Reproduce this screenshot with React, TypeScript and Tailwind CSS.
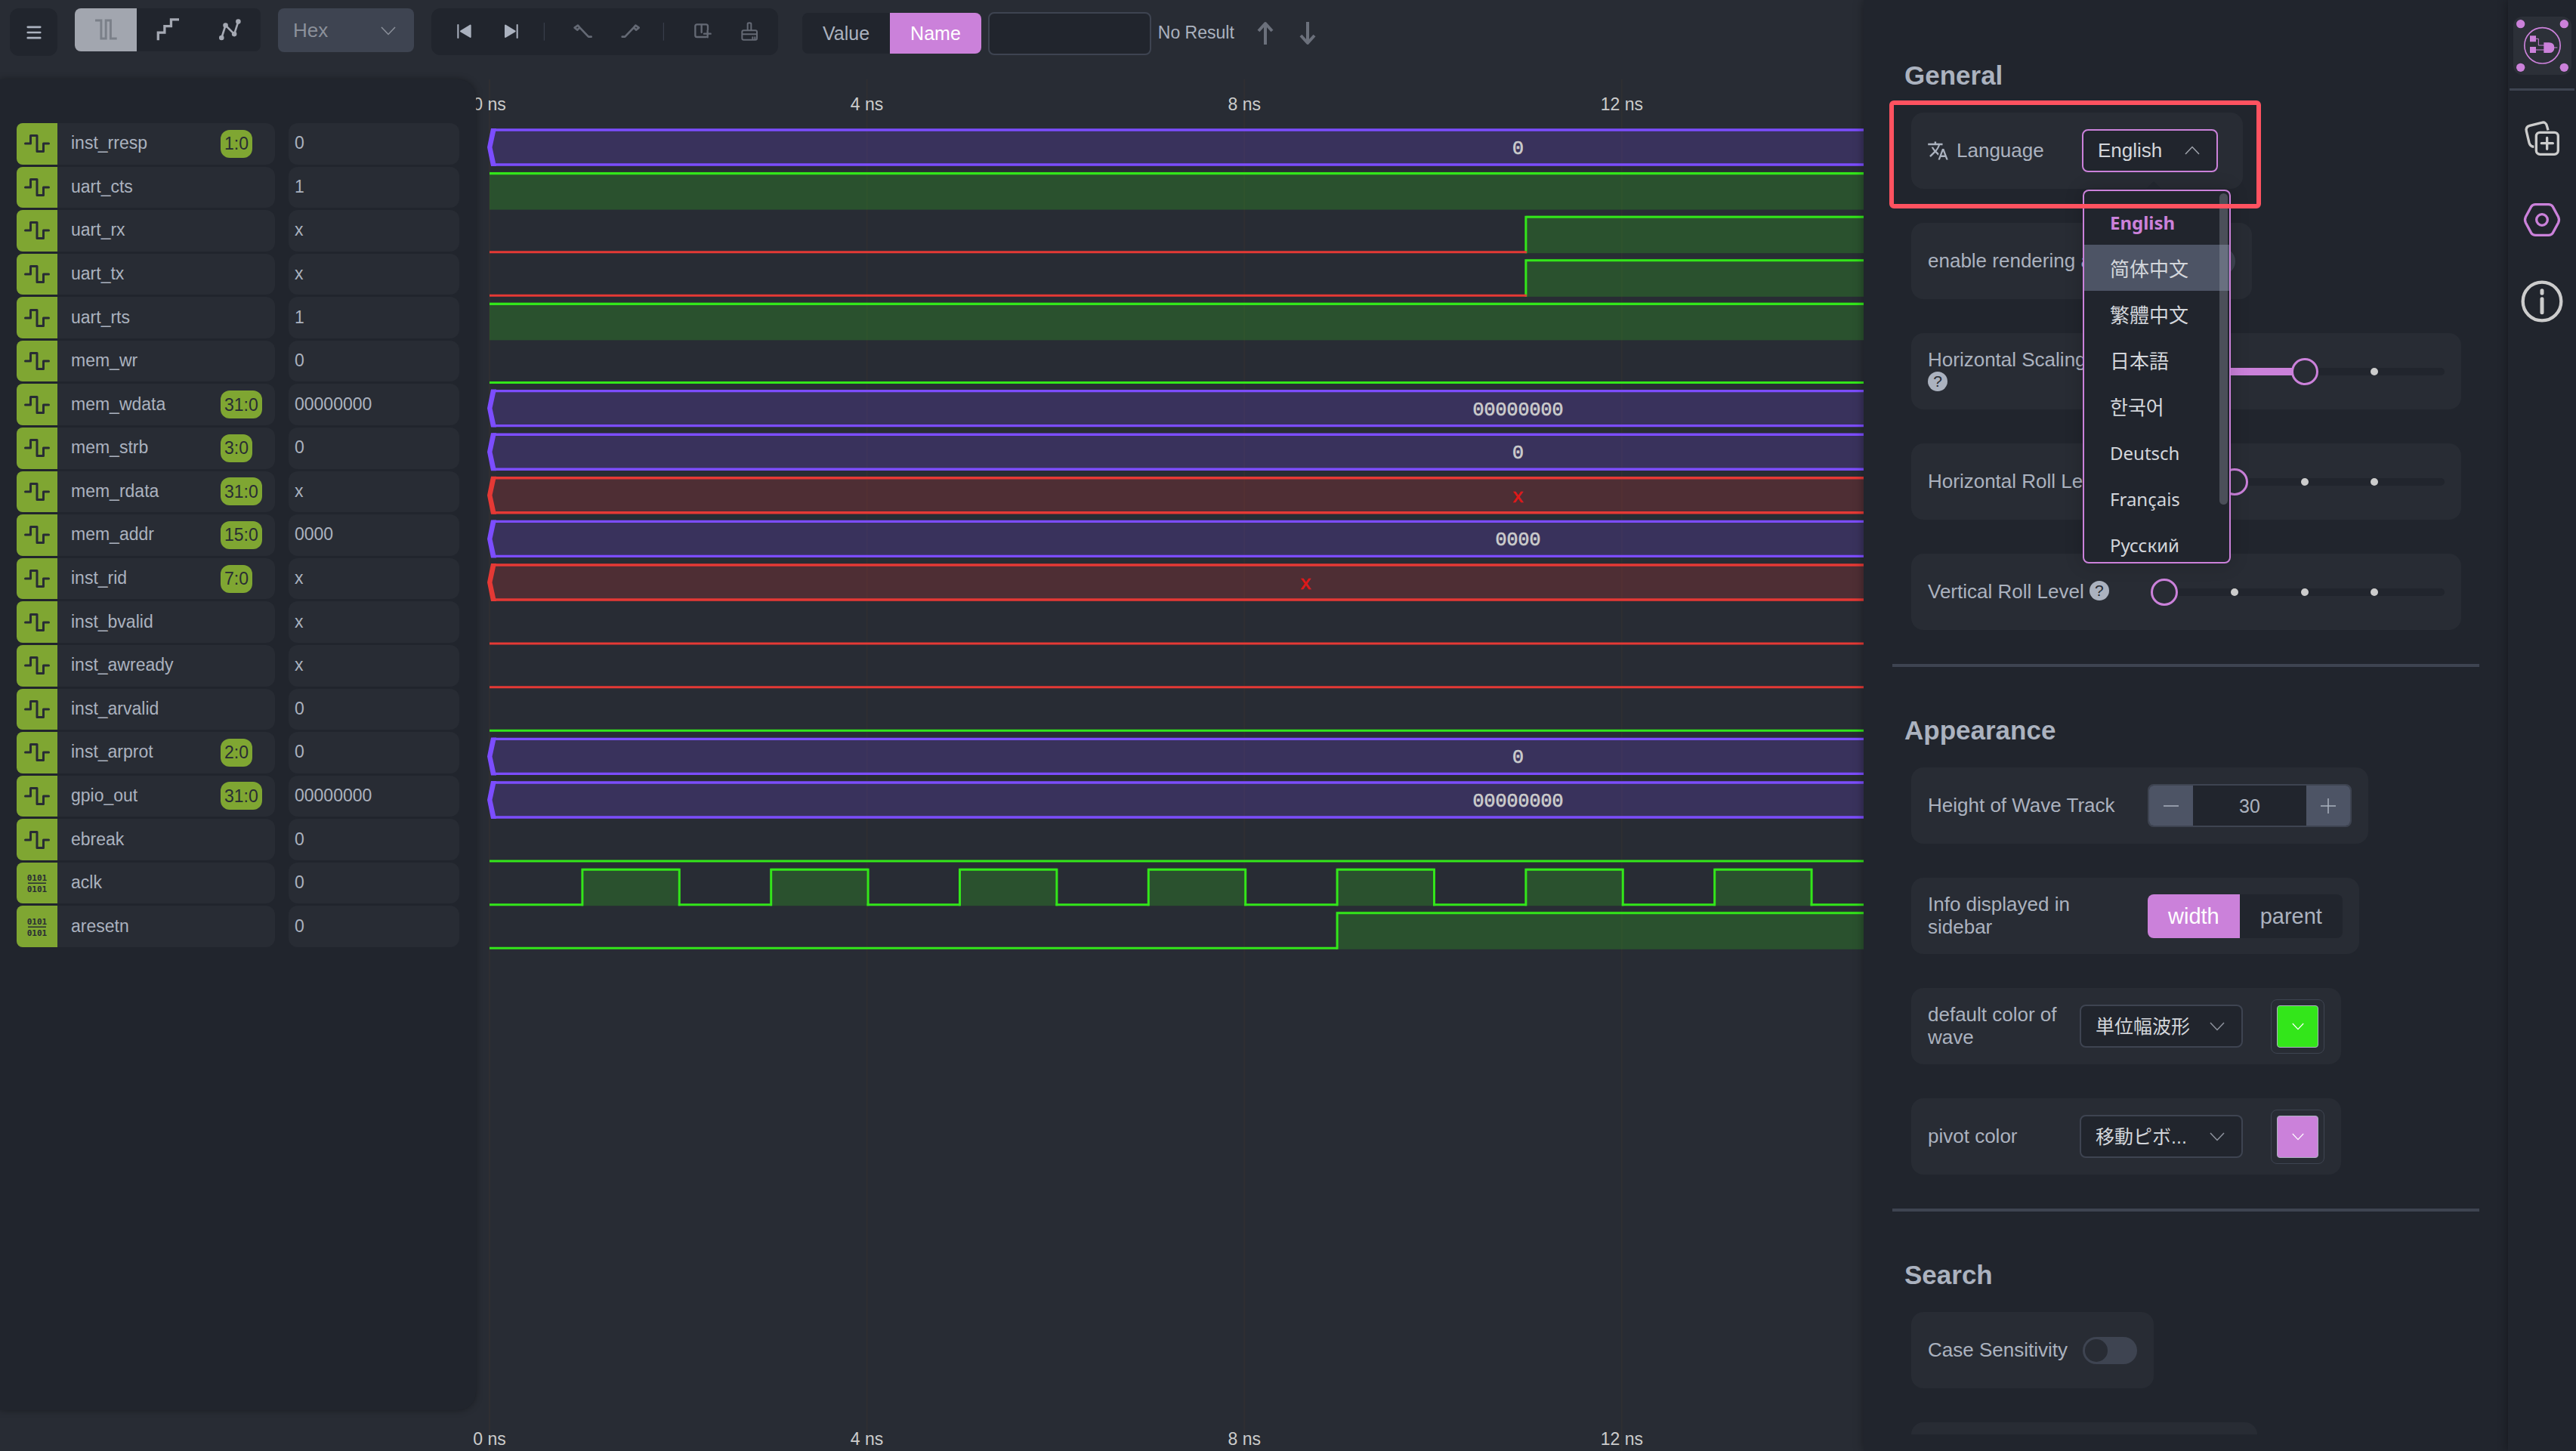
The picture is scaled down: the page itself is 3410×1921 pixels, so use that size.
import { useState, type ReactNode } from 'react';
import { MdTranslate } from 'react-icons/md';

type Wave = 'bus' | 'busX' | 'high' | 'low' | 'x' | 'lateHigh' | 'clock' | 'reset';

type Signal = {
  name: string;
  range?: string;
  value: string;
  wave: Wave;
  label?: string;
  labelNs?: number;
  param?: boolean;
};

const SIGNALS: Signal[] = [
  { name: 'inst_rresp', range: '1:0', value: '0', wave: 'bus', label: '0' },
  { name: 'uart_cts', value: '1', wave: 'high' },
  { name: 'uart_rx', value: 'x', wave: 'lateHigh' },
  { name: 'uart_tx', value: 'x', wave: 'lateHigh' },
  { name: 'uart_rts', value: '1', wave: 'high' },
  { name: 'mem_wr', value: '0', wave: 'low' },
  { name: 'mem_wdata', range: '31:0', value: '00000000', wave: 'bus', label: '00000000' },
  { name: 'mem_strb', range: '3:0', value: '0', wave: 'bus', label: '0' },
  { name: 'mem_rdata', range: '31:0', value: 'x', wave: 'busX', label: 'x' },
  { name: 'mem_addr', range: '15:0', value: '0000', wave: 'bus', label: '0000' },
  { name: 'inst_rid', range: '7:0', value: 'x', wave: 'busX', label: 'x', labelNs: 8.65 },
  { name: 'inst_bvalid', value: 'x', wave: 'x' },
  { name: 'inst_awready', value: 'x', wave: 'x' },
  { name: 'inst_arvalid', value: '0', wave: 'low' },
  { name: 'inst_arprot', range: '2:0', value: '0', wave: 'bus', label: '0' },
  { name: 'gpio_out', range: '31:0', value: '00000000', wave: 'bus', label: '00000000' },
  { name: 'ebreak', value: '0', wave: 'low' },
  { name: 'aclk', value: '0', wave: 'clock', param: true },
  { name: 'aresetn', value: '0', wave: 'reset', param: true },
];

const NS = 124.9;
const X0 = 18;
const END = 3200;
const PITCH = 57.6;
const TOP = 65;
const GREEN = '#33e61a';
const RED = '#e53935';
const PURPLE = '#7c4dff';

const at = (ns: number) => X0 + ns * NS;

function Pulse({ from, to, y }: { from: number; to: number; y: number }) {
  return (
    <>
      <rect x={from} y={y} width={to - from} height={50} fill={GREEN} fillOpacity={0.2} />
      <path d={`M${from} ${y + 50}V${y + 2}H${to}V${y + 50}`} fill="none" stroke={GREEN} strokeWidth={3} />
    </>
  );
}

function Low({ from, to, y, color }: { from: number; to: number; y: number; color: string }) {
  return <path d={`M${from} ${y + 48.5}H${to}`} stroke={color} strokeWidth={3} />;
}

function Bus({ y, color }: { y: number; color: string }) {
  return (
    <>
      <path d={`M${END} ${y + 1}H24L18 ${y + 25}L24 ${y + 49}H${END}z`} fill={color} fillOpacity={0.2} />
      <path d={`M22 ${y + 2}H${END}M22 ${y + 48}H${END}`} stroke={color} strokeWidth={3.4} />
      <path
        d={`M20 ${y}L15 ${y + 25}L20 ${y + 50}H27L21.5 ${y + 25}L27 ${y}z`}
        fill={color}
      />
    </>
  );
}

function WaveRow({ signal, y }: { signal: Signal; y: number }) {
  switch (signal.wave) {
    case 'bus':
      return <Bus y={y} color={PURPLE} />;
    case 'busX':
      return <Bus y={y} color={RED} />;
    case 'high':
      return (
        <>
          <rect x={X0} y={y} width={END} height={50} fill={GREEN} fillOpacity={0.2} />
          <path d={`M${X0} ${y + 2}H${END}`} stroke={GREEN} strokeWidth={3.4} />
        </>
      );
    case 'low':
      return <Low from={X0} to={END} y={y} color={GREEN} />;
    case 'x':
      return <Low from={X0} to={END} y={y} color={RED} />;
    case 'lateHigh':
      return (
        <>
          <Pulse from={at(11) - 2} to={END} y={y} />
          <Low from={X0} to={at(11) - 1} y={y} color={RED} />
        </>
      );
    case 'reset':
      return (
        <>
          <Low from={X0} to={at(9) - 2} y={y} color={GREEN} />
          <Pulse from={at(9) - 2} to={END} y={y} />
        </>
      );
    case 'clock':
      return (
        <>
          {[1, 3, 5, 7, 9, 11, 13, 15, 17, 19].map((t) => (
            <g key={t}>
              <Low from={t === 1 ? X0 : at(t - 1)} to={at(t) - 1} y={y} color={GREEN} />
              <Pulse from={at(t) - 2} to={at(t + 1) + 1.5} y={y} />
            </g>
          ))}
        </>
      );
  }
}

function WaveCanvas() {
  const ticks = [0, 4, 8, 12, 16, 20];
  return (
    <svg className="block h-full w-full overflow-visible" role="img" aria-label="Waveforms">
      {ticks.map((t) => (
        <line key={t} x1={at(t)} x2={at(t)} y1="0" y2="100%" stroke="#2f2f32" strokeWidth={2} />
      ))}
      {SIGNALS.map((s, i) => (
        <g key={s.name}>
          <WaveRow signal={s} y={TOP + i * PITCH} />
          {s.label && (
            <text
              x={at(s.labelNs ?? 10.9)}
              y={TOP + i * PITCH + 34}
              textAnchor="middle"
              fill={s.wave === 'busX' ? '#e01818' : '#cccccc'}
              stroke={s.wave === 'busX' ? '#e01818' : '#cccccc'}
              strokeWidth={0.7}
              className="font-['Liberation_Mono',monospace] text-[25px]"
            >
              {s.label}
            </text>
          )}
        </g>
      ))}
      {ticks.map((t) => (
        <g key={t} fill="#cccccc" textAnchor="middle" className="text-[23px]">
          <text x={at(t)} y={41}>{`${t} ns`}</text>
          <text x={at(t)} y="100%" dy={-8}>{`${t} ns`}</text>
        </g>
      ))}
    </svg>
  );
}

function PulseGlyph() {
  return (
    <svg viewBox="0 0 54 54" className="h-[54px] w-[54px]" fill="none" stroke="#282c34" strokeWidth={3} strokeLinecap="round" strokeLinejoin="round">
      <path d="M11.5 27H18.500V16.500H27V37.500H35.500V27H42.500" />
    </svg>
  );
}

function BitsGlyph() {
  return (
    <svg viewBox="0 0 54 54" className="h-[54px] w-[54px]" fill="#282c34">
      <g textAnchor="middle" className="font-['DejaVu_Sans_Mono',monospace] text-[11px] font-bold">
        <text x="27" y="24">0101</text>
        <text x="27" y="39">0101</text>
      </g>
      <rect x="15" y="26.500" width="24" height="1.500" />
    </svg>
  );
}

function SignalPanel() {
  return (
    <aside className="relative z-10 mb-[54px] w-[630px] shrink-0 rounded-r-3xl bg-[#21252d] pt-[58px] pl-[22px] shadow-[0_0_10px_rgba(0,0,0,0.35)]">
      <ul className="grid h-[1094px] grid-rows-[repeat(19,1fr)]">
        {SIGNALS.map((s) => (
          <li key={s.name} className="flex gap-[18px] pb-[3px]">
            <div className="flex w-[342px] overflow-hidden rounded-l-lg rounded-r-xl bg-[#282c34]">
              <span className="flex w-[54px] items-center bg-[#7fa632]">{s.param ? <BitsGlyph /> : <PulseGlyph />}</span>
              <span className="flex flex-1 items-center pl-[18px]">
                <span className="w-[198px] shrink-0 pb-0.5">{s.name}</span>
                {s.range && (
                  <span className="flex h-[37px] items-center rounded-xl bg-[#7fa632] px-[5px] text-[#282c34]">{s.range}</span>
                )}
              </span>
            </div>
            <div className="flex w-[226px] items-center rounded-xl bg-[#282c34] pb-0.5 pl-2">{s.value}</div>
          </li>
        ))}
      </ul>
    </aside>
  );
}

function Chevron({ className, up = false }: { className: string; up?: boolean }) {
  return (
    <svg viewBox="0 0 20 12" className={className} fill="none" stroke="currentColor" strokeWidth={1.5}>
      <path d={up ? 'M1 11L10 1.500L19 11' : 'M1 1L10 10.500L19 1'} />
    </svg>
  );
}

function Toolbar() {
  const [mode, setMode] = useState(0);
  const [kind, setKind] = useState('Name');
  const modes = [
    <svg key="d" viewBox="370 70 100 100" className="h-[33px] w-[33px]" fill="none" stroke="#7b8089" strokeWidth={9}>
      <path d="M376 82H400V155H419V82H438V155H463" />
    </svg>,
    <svg key="s" viewBox="616 70 100 100" className="h-[33px] w-[33px]" fill="none" stroke="#a5a9b3" strokeWidth={10}>
      <path d="M626 162V131H652V105H678V79H710" />
    </svg>,
    <svg key="l" viewBox="860 70 100 100" className="h-[33px] w-[33px]" fill="#a5a9b3" stroke="#a5a9b3" strokeWidth={8}>
      <path d="M876 152L892 102L927 137L943 87" fill="none" />
      <circle cx="876" cy="152" r="6" />
      <circle cx="892" cy="102" r="6" />
      <circle cx="927" cy="137" r="6" />
      <circle cx="943" cy="87" r="6" />
    </svg>,
  ];
  const names = ['Digital', 'Analog step', 'Analog line'];
  return (
    <header className="flex h-[105px] shrink-0 items-start pt-[11px] pl-[13px]">
      <button aria-label="Menu" className="flex size-[63px] items-center justify-center rounded-xl bg-[#21252d]">
        <svg viewBox="97 92 70 70" className="size-6" stroke="#abb2bf" strokeWidth={8} strokeLinecap="round">
          <path d="M108 106H156M108 127H156M108 148H156" />
        </svg>
      </button>
      <div className="ml-[23px] flex h-[57px] overflow-hidden rounded-lg bg-[#21252d]">
        {modes.map((icon, i) => (
          <button
            key={names[i]}
            aria-label={names[i]}
            aria-pressed={mode === i}
            onClick={() => setMode(i)}
            className={`flex w-[82px] items-center justify-center ${mode === i ? 'bg-[#a2a6af]' : ''}`}
          >
            {icon}
          </button>
        ))}
      </div>
      <div className="relative ml-[23px] text-[#8b909a]">
        <select aria-label="Number format" className="h-[58px] w-[180px] appearance-none rounded-lg bg-[#3e4451] pl-5 text-[26px]">
          <option>Hex</option>
        </select>
        <Chevron className="pointer-events-none absolute top-6 right-6 h-3 w-5" />
      </div>
      <div className="ml-[23px] flex h-[62px] w-[459px] items-center rounded-xl bg-[#21252d]">
        <svg viewBox="153 33 1377 186" className="h-full w-full" role="group" aria-label="Edit actions">
          <g fill="#abb2bf" stroke="#abb2bf" strokeWidth={6} strokeLinecap="round" strokeLinejoin="round">
            <path d="M259 99V150M308 101V147L270 124z" />
            <path d="M494 99V150M447 101V147L485 124z" />
          </g>
          <path d="M601 90V161M1075 90V161" stroke="#3e4451" strokeWidth={3} />
          <g fill="none" stroke="#646974" strokeWidth={8} strokeLinecap="round" strokeLinejoin="round">
            <path d="M788 146H777L742 109M735 101L722 110L733 119L742 109z" />
            <path d="M911 146H922L957 109M964 101L977 110L966 119L957 109z" />
          </g>
          <g fill="none" stroke="#646974" strokeWidth={7} strokeLinecap="round" strokeLinejoin="round">
            <path d="M1251 118V104Q1251 97 1244 97H1208Q1201 97 1201 104V140Q1201 147 1208 147H1244M1226 98V129M1236 134H1262M1250 121V148" />
            <path d="M1409 120V95Q1409 91 1416 91Q1423 91 1423 95V120M1387 136V127Q1387 121 1393 121H1440Q1446 121 1446 127V136zM1387 136V152Q1387 158 1393 158H1440Q1446 158 1446 152V136M1429 148V154M1438 148V154" strokeWidth={6} />
          </g>
        </svg>
      </div>
      <div className="ml-8 flex h-[66px] items-center">
        <div className="flex h-[54px] overflow-hidden rounded-lg bg-[#21252d] text-[25px]">
          {['Value', 'Name'].map((k) => (
            <button
              key={k}
              aria-pressed={kind === k}
              onClick={() => setKind(k)}
              className={`px-[27px] ${kind === k ? 'bg-[#cb81da] text-white' : ''}`}
            >
              {k}
            </button>
          ))}
        </div>
        <input aria-label="Search signals" className="ml-[9px] h-[57px] w-[216px] rounded-lg border-2 border-[#3e4451] bg-[#21252d] px-4" />
        <span className="ml-[9px] w-[118px] pb-0.5 whitespace-nowrap">No Result</span>
        <button aria-label="Previous result" className="ml-2 flex w-8 justify-center text-[#6b707b]">
          <svg viewBox="0 0 22 32" className="h-8 w-[22px]" fill="none" stroke="currentColor" strokeWidth={4} strokeLinejoin="round">
            <path d="M11 31V4M2 13L11 3L20 13" />
          </svg>
        </button>
        <button aria-label="Next result" className="ml-6 flex w-8 justify-center text-[#6b707b]">
          <svg viewBox="0 0 22 32" className="h-8 w-[22px]" fill="none" stroke="currentColor" strokeWidth={4} strokeLinejoin="round">
            <path d="M11 1V28M2 19L11 29L20 19" />
          </svg>
        </button>
      </div>
    </header>
  );
}

function Row({ children }: { children?: ReactNode }) {
  return (
    <div className="mb-[45px] flex h-[101px] w-fit items-center rounded-2xl bg-[#282c34] px-[22px] text-[26px] leading-[30px] [&>label]:pb-0.5">
      {children}
    </div>
  );
}

function Heading({ children, first = false }: { children: string; first?: boolean }) {
  return (
    <h2 className={`-ml-[9px] mb-[29px] text-[35px] leading-10 font-bold ${first ? 'mt-[80px]' : 'mt-[64px]'}`}>{children}</h2>
  );
}

function Help() {
  return (
    <span role="img" aria-label="Help" className="inline-block h-[26px] w-[26px] rounded-full bg-[#abb2bf] text-center align-[3px] text-[21px] leading-[26px] text-[#282c34]">
      ?
    </span>
  );
}

function Switch({ id }: { id: string }) {
  return (
    <input
      id={id}
      type="checkbox"
      role="switch"
      className="ml-5 h-9 w-[72px] appearance-none rounded-full bg-[#3e4451] p-[3px] before:block before:size-[30px] before:rounded-full before:bg-[#282c34] checked:bg-[#cb81da] checked:before:ml-9"
    />
  );
}

function Slider({ id, label, start, help = false }: { id: string; label: string; start: number; help?: boolean }) {
  const [value, setValue] = useState(start);
  return (
    <Row>
      <label htmlFor={id} className="w-[240px]">
        {label} {help && <Help />}
      </label>
      <div className="relative ml-[73px] h-[10px] w-[371px] rounded-full bg-[#21252d]">
        <div className="absolute inset-0 flex justify-between px-[88px]">
          {[1, 2, 3].map((n) => (
            <span key={n} className="size-[10px] rounded-full bg-[#cccccc]" />
          ))}
        </div>
        <div className="relative h-full rounded-full bg-[#cb81da]" style={{ width: `${value * 25}%` }} />
        <input
          id={id}
          type="range"
          min={0}
          max={4}
          value={value}
          onChange={(e) => setValue(Number(e.target.value))}
          className="absolute -inset-x-[18px] -top-[13px] h-9 w-[407px] appearance-none bg-transparent [&::-webkit-slider-thumb]:size-9 [&::-webkit-slider-thumb]:appearance-none [&::-webkit-slider-thumb]:rounded-full [&::-webkit-slider-thumb]:border-[3px] [&::-webkit-slider-thumb]:border-[#cb81da] [&::-webkit-slider-thumb]:bg-[#282c34]"
        />
      </div>
    </Row>
  );
}

const LANGUAGES = ['English', '简体中文', '繁體中文', '日本語', '한국어', 'Deutsch', 'Français', 'Русский'];

const LANGUAGE_FONTS: Record<string, string> = {
  简体中文: "text-[26px] font-['Noto_Sans_CJK_SC',sans-serif]",
  繁體中文: "text-[26px] font-['Noto_Sans_CJK_TC',sans-serif]",
  日本語: "text-[26px] font-['Noto_Sans_CJK_JP',sans-serif]",
  한국어: "text-[26px] font-['Noto_Sans_CJK_KR',sans-serif]",
};

function LanguageMenu() {
  return (
    <div className="absolute top-[80px] left-px z-20 h-[495px] w-[196px] rounded-lg border-2 border-[#cb81da] bg-[#21252d] shadow-[0_0_24px_rgba(0,0,0,0.2)]">
      <span className="absolute -top-[10px] left-[84px] size-4 rotate-45 rounded-tl-xs bg-[#21252d] [clip-path:polygon(0_0,100%_0,0_100%)]" />
      <ul role="listbox" aria-label="Language" className="h-full overflow-hidden rounded-md pt-[10px]">
        {LANGUAGES.map((l, i) => (
          <li key={l} role="option" aria-selected={i === 0}>
            <button
              className={`block h-[61px] w-full pl-[34px] text-left ${LANGUAGE_FONTS[l] ?? "pt-[3px] font-['Noto_Sans',sans-serif] text-[24px]"} ${
                i === 0 ? 'font-bold text-[#cb81da]' : ''
              } ${i === 1 ? 'bg-[#4d5465]' : ''}`}
            >
              {l}
            </button>
          </li>
        ))}
      </ul>
      <span className="absolute top-[3px] right-[2px] h-[412px] w-[11px] rounded-full bg-[#abb2bf]/30" />
    </div>
  );
}

function ColorRow({ id, label, option, tone }: { id: string; label: string; option: string; tone: string }) {
  return (
    <Row>
      <label htmlFor={id} className="w-[181px]">
        {label}
      </label>
      <div className="relative ml-5 text-[#d3d6db]">
        <select
          id={id}
          className="block h-[57px] w-[216px] appearance-none rounded-lg border-2 border-[#3e4451] bg-[#21252d] pl-[19px] font-['Liberation_Sans','Noto_Sans_CJK_JP',sans-serif] text-[25px]"
        >
          <option>{option}</option>
        </select>
        <Chevron className="pointer-events-none absolute top-[23px] right-6 h-3 w-5 text-[#8f949e]" />
      </div>
      <button aria-label={`Pick ${label}`} className="ml-[37px] rounded-lg border border-[#3e4451] p-[7px]">
        <span className={`flex h-[56px] w-[55px] items-center justify-center rounded-sm border border-[#abb2bf] text-white ${tone}`}>
          <Chevron className="h-[10px] w-4" />
        </span>
      </button>
    </Row>
  );
}

function Divider() {
  return <hr className="-ml-[25px] w-[777px] border-t-4 border-[#3e4451]" />;
}

function Settings() {
  const [track, setTrack] = useState(30);
  const [info, setInfo] = useState('width');
  return (
    <section className="relative z-10 w-[853px] shrink-0 bg-[#21252d] pb-[22px] shadow-[0_0_12px_rgba(0,0,0,0.35)]">
      <div className="flex h-full flex-col overflow-hidden pl-[63px] [&>*]:shrink-0">
        <Heading first>General</Heading>
        <div className="relative w-fit">
          <Row>
            <MdTranslate className="size-[29px] -ml-px" />
            <label htmlFor="language" className="ml-[10px] w-[166px]">
              Language
            </label>
            <div className="relative mr-[11px] text-[#d3d6db]">
              <select id="language" className="block h-[57px] w-[180px] appearance-none rounded-lg border-2 border-[#cb81da] bg-[#21252d] pb-px pl-[19px]">
                <option>English</option>
              </select>
              <Chevron up className="pointer-events-none absolute top-[22px] right-6 h-3 w-5 text-[#a0a4ad]" />
              <LanguageMenu />
            </div>
          </Row>
          <div className="pointer-events-none absolute -top-4 -right-6 -left-[29px] z-30 h-[143px] rounded-md border-[6px] border-[#ff5260]" />
        </div>
        <Row>
          <label htmlFor="animation" className="whitespace-nowrap">
            enable rendering animation
          </label>
          <Switch id="animation" />
        </Row>
        <Slider id="scaling" label="Horizontal Scaling" start={2} help />
        <Slider id="hroll" label="Horizontal Roll Level" start={1} />
        <Slider id="vroll" label="Vertical Roll Level" start={0} help />
        <Divider />

        <Heading>Appearance</Heading>
        <Row>
          <label htmlFor="track" className="w-[291px]">
            Height of Wave Track
          </label>
          <div className="flex h-[57px] w-[270px] overflow-hidden rounded-lg border-2 border-[#3e4451] bg-[#21252d]">
            <button aria-label="Decrease" onClick={() => setTrack(track - 1)} className="flex w-[58px] items-center justify-center bg-[#4d5465]">
              <svg viewBox="0 0 20 20" className="size-5" stroke="currentColor" strokeWidth={1.5}>
                <path d="M0 10H20" />
              </svg>
            </button>
            <input
              id="track"
              value={track}
              onChange={(e) => setTrack(Number(e.target.value) || 0)}
              className="w-0 flex-1 bg-transparent text-center text-[25px]"
            />
            <button aria-label="Increase" onClick={() => setTrack(track + 1)} className="flex w-[58px] items-center justify-center bg-[#4d5465]">
              <svg viewBox="0 0 20 20" className="size-5" stroke="currentColor" strokeWidth={1.5}>
                <path d="M0 10H20M10 0V20" />
              </svg>
            </button>
          </div>
        </Row>
        <Row>
          <span className="w-[250px] pb-0.5">Info displayed in sidebar</span>
          <div className="ml-[41px] flex h-[58px] overflow-hidden rounded-lg bg-[#21252d] text-[29px]">
            {['width', 'parent'].map((k) => (
              <button
                key={k}
                aria-pressed={info === k}
                onClick={() => setInfo(k)}
                className={`px-[27px] ${info === k ? 'bg-[#cb81da] text-white' : ''}`}
              >
                {k}
              </button>
            ))}
          </div>
        </Row>
        <ColorRow id="wave-color" label="default color of wave" option="単位幅波形" tone="bg-[#33e61a]" />
        <ColorRow id="pivot-color" label="pivot color" option="移動ピボ..." tone="bg-[#cb81da]" />
        <Divider />

        <Heading>Search</Heading>
        <Row>
          <label htmlFor="case">Case Sensitivity</label>
          <Switch id="case" />
        </Row>
        <Row>
          <div className="w-[414px]" />
        </Row>
      </div>
    </section>
  );
}

function Rail() {
  return (
    <nav className="relative z-20 flex w-[90px] shrink-0 flex-col items-center bg-[#21252d] pt-[22px] text-[#cccccc] shadow-[0_0_12px_rgba(0,0,0,0.35)]">
      <a href="#home" aria-label="Home" className="rounded-xl bg-[#2c3038]">
        <svg viewBox="680 65 231 231" className="size-[77px]" fill="#cb81da">
          <circle cx="709" cy="94" r="17" />
          <circle cx="882" cy="94" r="17" />
          <circle cx="709" cy="267" r="17" />
          <circle cx="882" cy="267" r="17" />
          <circle cx="795.5" cy="180" r="71" fill="none" stroke="#cb81da" strokeWidth={5} />
          <path d="M746 141h24v24h-24zM746 185h24v24h-24zM801 168H822Q843 168 843 188.500Q843 209 822 209H801z" />
          <path d="M769 153H780V179H803M769 197H803M840 188H855" fill="none" stroke="#cb81da" strokeWidth={3} />
        </svg>
      </a>
      <hr className="mt-[18px] mb-[35px] w-[86px] border-t-[3px] border-[#3e4451]" />
      <div className="flex flex-col gap-[52px]">
        <button aria-label="Import">
          <svg viewBox="711 464 168 168" className="size-14" fill="none" stroke="currentColor" strokeWidth={10} strokeLinejoin="round">
            <rect x="772" y="525" width="87" height="87" rx="15" />
            <path d="M793 568H838M815 546V591" strokeLinecap="round" />
            <path d="M819 516L815 501Q810 481 794 486L746 498Q729 503 733 520L744 566Q748 581 763 582" />
          </svg>
        </button>
        <button aria-label="Settings" className="text-[#cb81da]">
          <svg viewBox="711 788 168 168" className="size-14" fill="none" stroke="currentColor" strokeWidth={10}>
            <path d="M769 811H821Q832 811 838 820L860 861Q865 872 860 883L838 924Q832 933 821 933H769Q758 933 752 924L730 883Q725 872 730 861L752 820Q758 811 769 811z" />
            <circle cx="795" cy="872" r="22" />
          </svg>
        </button>
        <button aria-label="About">
          <svg viewBox="711 1112 168 168" className="size-14" fill="none" stroke="currentColor" strokeLinecap="round">
            <circle cx="795" cy="1196" r="76" strokeWidth={13} />
            <path d="M795 1153V1164M795 1186V1240" strokeWidth={15} />
          </svg>
        </button>
      </div>
    </nav>
  );
}

export default function App() {
  return (
    <div className="flex h-screen overflow-hidden bg-[#282c34] font-['Liberation_Sans',Arial,sans-serif] text-[23px] leading-7 text-[#abb2bf]">
      <main className="flex min-w-0 flex-1 flex-col">
        <Toolbar />
        <div className="flex min-h-0 flex-1">
          <SignalPanel />
          <div className="min-w-0 flex-1">
            <WaveCanvas />
          </div>
        </div>
      </main>
      <Settings />
      <Rail />
    </div>
  );
}
